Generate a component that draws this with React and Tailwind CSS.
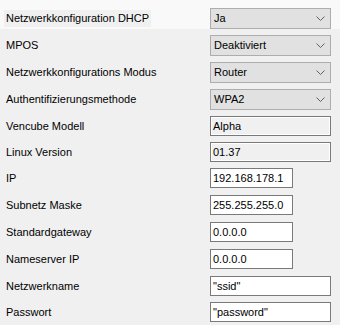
import React from "react";

// Zeilen: Auswahlfelder oben, danach Textfelder
const combos = [
  { label: "Netzwerkkonfiguration DHCP", value: "Ja" },
  { label: "MPOS", value: "Deaktiviert" },
  { label: "Netzwerkkonfigurations Modus", value: "Router" },
  { label: "Authentifizierungsmethode", value: "WPA2" },
];

const fields = [
  { label: "Vencube Modell", value: "Alpha", ro: true, wide: true, mt: "mt-[6px]" },
  { label: "Linux Version", value: "01.37", ro: true, wide: true, mt: "mt-[6px]" },
  { label: "IP", value: "192.168.178.1", mt: "mt-[6px]" },
  { label: "Subnetz Maske", value: "255.255.255.0", mt: "mt-[7px]" },
  { label: "Standardgateway", value: "0.0.0.0", mt: "mt-[7px]" },
  { label: "Nameserver IP", value: "0.0.0.0", mt: "mt-[7px]" },
  { label: "Netzwerkname", value: '"ssid"', wide: true, mt: "mt-[7px]" },
  { label: "Passwort", value: '"password"', wide: true, mt: "mt-[6px]" },
];

function Chevron() {
  return (
    <svg width="9" height="5" viewBox="0 0 9 5" className="block">
      <polyline points="0.5,0.5 4.5,4.5 8.5,0.5" fill="none" stroke="#606060" strokeWidth="1" />
    </svg>
  );
}

function Combo({ value }) {
  return (
    <div className="flex h-[21px] w-[121px] items-center justify-between border border-[#adadad] bg-[#e1e1e1] pl-[3px] pr-[5px]">
      <span>{value}</span>
      <Chevron />
    </div>
  );
}

export default function App() {
  return (
    <div
      className="h-[325px] w-[340px] overflow-hidden bg-[#f0f0f0] text-[11px] leading-[13px] text-black"
      style={{ fontFamily: '"Liberation Sans", Arial, sans-serif' }}
    >
      {/* erste Zeile (hervorgehoben) */}
      <div className="flex h-[29px] items-end bg-[#f9f9f9] pl-[4px]">
        <div className="w-[206px] pb-[2px]">
          <span className="inline-block h-[17px] bg-[#f0f0f0] px-[2px] leading-[17px]">
            {combos[0].label}
          </span>
        </div>
        <Combo value={combos[0].value} />
      </div>

      {combos.slice(1).map((c) => (
        <div key={c.label} className="mt-[6px] flex items-center pl-[6px]">
          <div className="w-[204px]">{c.label}</div>
          <Combo value={c.value} />
        </div>
      ))}

      {fields.map((f) => (
        <div key={f.label} className={`${f.mt} flex items-center pl-[6px]`}>
          <div className="w-[204px]">{f.label}</div>
          <div
            className={`flex h-[20px] items-center border border-[#7a7a7a] pl-[2px] ${
              f.wide ? "w-[121px]" : "w-[83px]"
            } ${f.ro ? "bg-[#f0f0f0] shadow-[inset_0_0_0_1px_#ffffff]" : "bg-white"}`}
          >
            {f.value}
          </div>
        </div>
      ))}
    </div>
  );
}
